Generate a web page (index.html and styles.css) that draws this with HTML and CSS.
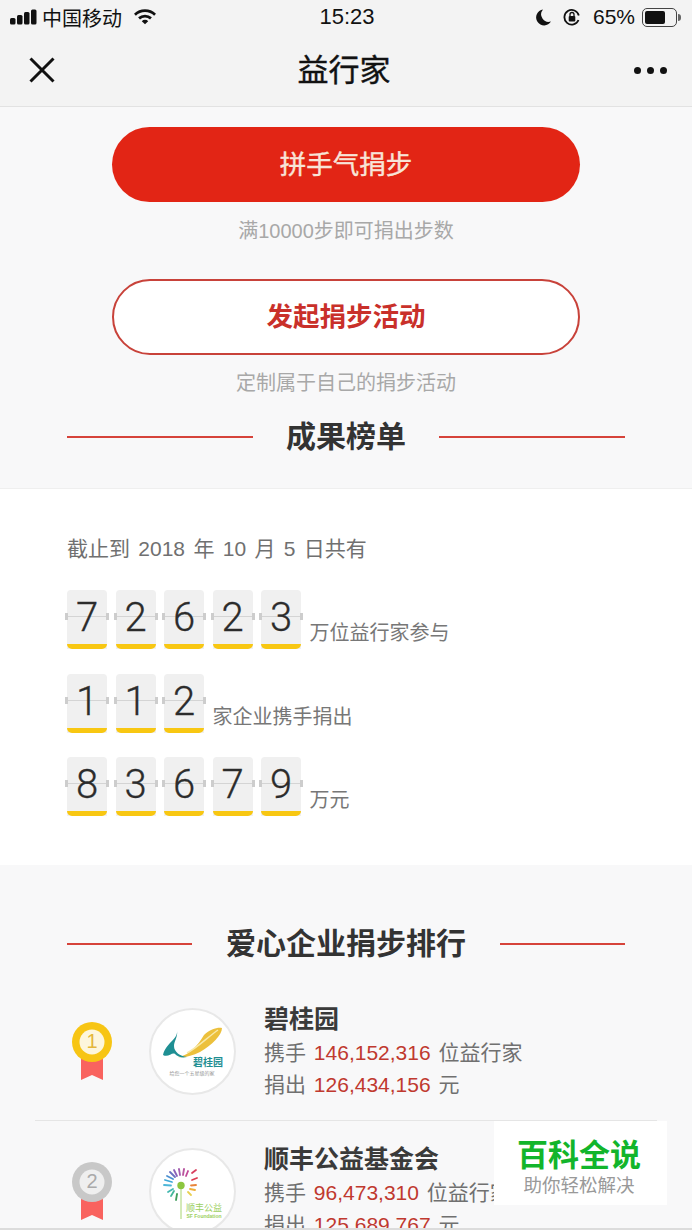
FILE: index.html
```html
<!DOCTYPE html>
<html lang="zh">
<head>
  <meta charset="UTF-8">
  <title>益行家</title>
  <link rel="stylesheet" href="styles.css">
</head>
<body>
  <header class="top">
    <div class="status">
      <div class="status-left">
        <svg class="signal" width="28" height="16" viewBox="0 0 28 16"><rect x="0" y="9" width="5.500" height="6.500" rx="1.500"/><rect x="7" y="6" width="5.500" height="9.500" rx="1.500"/><rect x="14" y="3" width="5.500" height="12.500" rx="1.500"/><rect x="21" y="0.500" width="5.500" height="15" rx="1.500"/></svg>
        <span>中国移动</span>
        <svg class="wifi" width="22" height="16" viewBox="0 0 24 17"><path d="M1 6a16 16 0 0 1 22 0" fill="none" stroke="#111" stroke-width="3"/><path d="M5.500 10a9.500 9.500 0 0 1 13 0" fill="none" stroke="#111" stroke-width="3"/><path d="M8.500 13l3.500 3.500 3.500-3.500a5 5 0 0 0-7 0z" fill="#111"/></svg>
      </div>
      <div class="status-time">15:23</div>
      <div class="status-right">
        <svg class="moon" width="16" height="18" viewBox="0 0 16 18"><path d="M7 1.500a8 8 0 1 0 8 12 7.500 7.500 0 0 1-8-12z" fill="#111"/></svg>
        <svg class="lock" width="18" height="18" viewBox="0 0 18 18"><path d="M15.500 12a7.300 7.300 0 1 1 .3-4.500" fill="none" stroke="#111" stroke-width="1.800"/><rect x="5.700" y="8" width="6.600" height="5.500" rx="1" fill="#111"/><path d="M7 8V6.500a2 2 0 0 1 4 0V8" fill="none" stroke="#111" stroke-width="1.300"/></svg>
        <span class="percent">65%</span>
        <div class="battery"><div class="battery-fill"></div></div>
        <div class="battery-tip"></div>
      </div>
    </div>
    <div class="nav">
      <svg width="26" height="26" viewBox="0 0 26 26"><path d="M1.500 1.500l23 23M24.500 1.500l-23 23" stroke="#111" stroke-width="3" fill="none"/></svg>
      <div class="nav-title">益行家</div>
      <div class="dots"><i></i><i></i><i></i></div>
    </div>
  </header>

  <section class="actions">
    <button class="btn btn-red">拼手气捐步</button>
    <p class="hint hint-one">满10000步即可捐出步数</p>
    <button class="btn btn-line">发起捐步活动</button>
    <p class="hint hint-two">定制属于自己的捐步活动</p>
    <div class="title-row title-first">
      <span class="rule"></span>
      <h2>成果榜单</h2>
      <span class="rule"></span>
    </div>
  </section>

  <section class="results">
    <p class="until">截止到 2018 年 10 月 5 日共有</p>
    <div class="count-row">
      <div class="flip">7</div><div class="flip">2</div><div class="flip">6</div><div class="flip">2</div><div class="flip">3</div>
      <span class="unit">万位益行家参与</span>
    </div>
    <div class="count-row">
      <div class="flip">1</div><div class="flip">1</div><div class="flip">2</div>
      <span class="unit">家企业携手捐出</span>
    </div>
    <div class="count-row">
      <div class="flip">8</div><div class="flip">3</div><div class="flip">6</div><div class="flip">7</div><div class="flip">9</div>
      <span class="unit">万元</span>
    </div>
  </section>

  <section class="ranking">
    <div class="title-row">
      <span class="rule"></span>
      <h2>爱心企业捐步排行</h2>
      <span class="rule"></span>
    </div>

    <div class="rank-item rank-first">
      <svg class="medal" width="42" height="60" viewBox="0 0 42 60">
        <path d="M10 34h22v24l-11-5-11 5z" fill="#f9635f"/>
        <circle cx="21" cy="20" r="20" fill="#f7c514"/>
        <circle cx="21" cy="20" r="12.500" fill="#fdf6dc"/>
        <text x="21" y="26" class="medal-num medal-gold">1</text>
      </svg>
      <div class="logo">
        <svg width="66" height="66" viewBox="0 0 66 66">
          <path d="M18 38C30 36 38 26 44 16C50 10 58 8 62 9C62 16 52 26 40 33C32 37 24 39 18 38Z" fill="#ecc03c"/>
          <path d="M27 34C37 29 48 18 58 11" fill="none" stroke="#f8e9a8" stroke-width="1.500"/>
          <path d="M17 12C18 20 6 24 3 36C8 39 12 33 15 35C18 38 22 39 27 38C20 37 14 33 14 27C14 22 18 18 17 12Z" fill="#1f8f93"/>
          <text x="48" y="47" class="logo-name">碧桂园</text>
          <text x="32" y="56" class="logo-small">给您一个五星级的家</text>
        </svg>
      </div>
      <div class="info">
        <h3>碧桂园</h3>
        <p>携手 <em>146,152,316</em> 位益行家</p>
        <p>捐出 <em>126,434,156</em> 元</p>
      </div>
    </div>

    <div class="rank-item rank-next">
      <svg class="medal" width="42" height="60" viewBox="0 0 42 60">
        <path d="M10 34h22v24l-11-5-11 5z" fill="#f9635f"/>
        <circle cx="21" cy="20" r="20" fill="#c8c8c8"/>
        <circle cx="21" cy="20" r="12.500" fill="#efefef"/>
        <text x="21" y="26" class="medal-num medal-silver">2</text>
      </svg>
      <div class="logo">
        <svg width="66" height="66" viewBox="0 0 66 66">
          <g stroke-width="1.800" stroke-linecap="round">
            <path d="M4 26L11 26.500" stroke="#4db6d8"/>
            <path d="M5 21L12 23" stroke="#3ea8d8"/>
            <path d="M7 17L13 20" stroke="#4a8fd0"/>
            <path d="M10 13L15 18" stroke="#6a6fc0"/>
            <path d="M14 11L17 17" stroke="#8a5fb8"/>
            <path d="M19 10L20 16" stroke="#a45eb0"/>
            <path d="M24 10L23 16" stroke="#b8569f"/>
            <path d="M28 12L26 17" stroke="#c24a9a"/>
            <path d="M36 11L32 14" stroke="#d8405f"/>
            <path d="M37 19L32 21" stroke="#dc3c52"/>
            <path d="M36 26L31 26.500" stroke="#e8843a"/>
            <path d="M35 31L30 30" stroke="#efb03a"/>
            <path d="M31 36L28 33" stroke="#e9d050"/>
            <path d="M8 33L13 30" stroke="#45b8b0"/>
            <path d="M11 37L14 32" stroke="#45b89a"/>
            <path d="M16 41L17 35" stroke="#3f9d5a"/>
          </g>
          <circle cx="21" cy="26.500" r="3.700" fill="#8cc63f"/>
          <path d="M21 30V60" stroke="#a8d470" stroke-width="1"/>
          <text x="44" y="52" class="logo-sf">顺丰公益</text>
          <text x="44" y="59" class="logo-sf-en">SF Foundation</text>
        </svg>
      </div>
      <div class="info">
        <h3>顺丰公益基金会</h3>
        <p>携手 <em>96,473,310</em> 位益行家</p>
        <p>捐出 <em>125,689,767</em> 元</p>
      </div>
    </div>
  </section>

  <div class="watermark">
    <div class="wm-title">百科全说</div>
    <div class="wm-sub">助你轻松解决</div>
  </div>
  <div class="bottom-line"></div>
</body>
</html>
```

FILE: styles.css
```css
* { box-sizing: border-box; }
html, body { margin: 0; padding: 0; }
body { width: 692px; height: 1230px; overflow: hidden; background-color: #f8f8f9; font-family: "Liberation Sans", "Noto Sans CJK SC", sans-serif; color: #333; position: relative; }
h2, h3, p { margin: 0; font-weight: normal; }
em { font-style: normal; color: #c0392f; }

.top { height: 107px; background-color: #f3f3f3; border-bottom: 1px solid #e2e2e2; }
.status { height: 34px; padding: 0 11px 0 10px; display: grid; grid-template-columns: 1fr auto 1fr; align-items: center; font-size: 20px; color: #111; }
.status-left { display: flex; align-items: center; gap: 4px; }
.status-left .wifi { margin-left: 8px; }
.signal { fill: #111; }
.status-time { font-size: 22px; margin-left: 3px; }
.status-right { display: flex; align-items: center; justify-content: flex-end; }
.status-right .lock { margin-left: 11px; }
.percent { margin: 0 7px 0 12px; font-size: 21px; }
.battery { width: 35px; height: 19px; padding: 2px; border: 1.500px solid #444; border-radius: 5px; }
.battery-fill { width: 20px; height: 100%; background-color: #111; border-radius: 2px; }
.battery-tip { width: 3px; height: 7px; margin-left: 1px; background-color: #666; border-radius: 0 3px 3px 0; }

.nav { height: 72px; padding: 0 25px 0 29px; display: flex; align-items: center; justify-content: space-between; position: relative; }
.nav-title { position: absolute; left: 0; right: 4px; top: 15px; text-align: center; font-size: 31px; line-height: 44px; color: #111; -webkit-text-stroke: 0.4px #111; }
.dots { display: flex; gap: 6px; }
.dots i { width: 7px; height: 7px; border-radius: 50%; background-color: #111; }

.actions { height: 381px; display: flex; flex-direction: column; align-items: center; padding-top: 20px; }
.btn { width: 468px; height: 75px; border-radius: 38px; padding: 0 0 5px; font-family: inherit; font-size: 26.500px; flex: none; }
.btn-red { background-color: #e22515; color: #f8e4d8; border: none; -webkit-text-stroke: 0.4px #f8e4d8; }
.btn-line { height: 76px; background-color: #fff; color: #c9302a; border: 2px solid #c8423a; font-weight: 700; }
.hint { font-size: 20px; color: #a8a8a8; }
.hint-one { margin: 17px 0 36px; line-height: 24px; }
.hint-two { margin-top: 16px; line-height: 24px; }

.title-row { width: 558px; display: flex; align-items: center; justify-content: space-between; }
.title-first { margin-top: 22px; }
.title-row h2 { font-size: 30px; font-weight: 700; color: #333; line-height: 40px; }
.rule { width: 186px; height: 2px; background-color: #d6433a; }
.ranking .rule { width: 125px; }

.results { height: 377px; background-color: #fff; border-top: 1px solid #efefef; padding: 46px 67px 0; }
.until { font-size: 21px; line-height: 28px; color: #707070; word-spacing: 2.500px; }
.count-row { display: flex; align-items: flex-end; gap: 8.500px; height: 59px; margin-top: 27px; }
.count-row + .count-row { margin-top: 24.500px; }
.flip { position: relative; width: 40px; height: 59px; font-family: Roboto, "Liberation Sans", sans-serif; font-weight: 300; font-size: 40px; line-height: 56px; text-align: center; color: #2c2c2c; -webkit-text-stroke: 0.3px #2c2c2c; border-radius: 4px 4px 0 0; background-color: #f0f0f0; background-image: linear-gradient(#d4d4d4, #d4d4d4); background-size: 100% 1px; background-position: 0 26px; background-repeat: no-repeat; }
.flip::after { content: ""; position: absolute; left: 0; right: 0; bottom: 0; height: 5px; background-color: #f8c712; border-radius: 0 0 5px 5px; }
.flip::before { content: ""; position: absolute; left: -2px; right: -2px; top: 23px; height: 7px; border-left: 3px solid #cdcdcd; border-right: 3px solid #cdcdcd; }
.unit { font-size: 20px; line-height: 24px; color: #777; padding-bottom: 4px; }

.ranking { padding-top: 59px; display: flex; flex-direction: column; align-items: center; }
.rank-item { width: 622px; padding-left: 36px; display: flex; align-items: flex-start; flex: none; }
.rank-first { margin-top: 24px; height: 133px; padding-top: 20px; border-bottom: 1px solid #e5e5e5; }
.rank-next { padding-top: 27px; }
.medal { margin-top: 14px; flex: none; }
.logo { width: 87px; height: 87px; margin-left: 36px; border-radius: 50%; background-color: #fff; border: 2px solid #e8e8e8; display: flex; align-items: center; justify-content: center; flex: none; }
.info { margin: -6px 0 0 28px; }
.info h3 { font-size: 25px; font-weight: 700; line-height: 35px; color: #3a3a3a; }
.info p { font-size: 21px; line-height: 32px; color: #707070; white-space: nowrap; word-spacing: 2px; }
.medal-num { font-size: 20px; text-anchor: middle; font-family: "Liberation Sans", sans-serif; }
.medal-gold { fill: #e4b63a; }
.medal-silver { fill: #aaa; }
.logo-name { font-size: 10px; font-weight: 700; fill: #1f8f93; text-anchor: middle; }
.logo-small { font-size: 5px; fill: #999; text-anchor: middle; }
.logo-sf { font-size: 9px; fill: #9ccf5f; text-anchor: middle; }
.logo-sf-en { font-size: 5px; font-weight: 700; fill: #9ccf5f; text-anchor: middle; }

.watermark { position: absolute; left: 494px; top: 1121px; width: 173px; height: 84px; padding-right: 3px; background-color: #fff; text-align: center; }
.wm-title { font-size: 31px; font-weight: 700; line-height: 40px; color: #12b52b; margin-top: 15px; }
.wm-sub { font-size: 18.500px; line-height: 20px; color: #999; }
.bottom-line { position: absolute; left: 0; right: 0; bottom: 0; height: 2px; background-color: #dcdcdc; }
```
